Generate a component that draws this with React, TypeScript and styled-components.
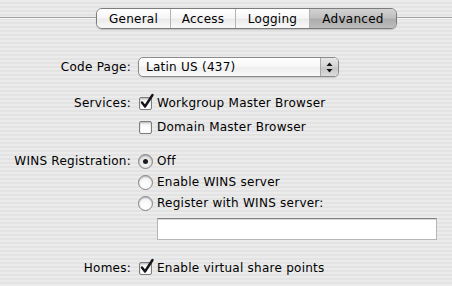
import React from "react";
import styled, { createGlobalStyle } from "styled-components";

const Global = createGlobalStyle`
  html, body {
    margin: 0;
    padding: 0;
    width: 452px;
    height: 286px;
    overflow: hidden;
  }
  body {
    background: repeating-linear-gradient(
      to bottom,
      #ebebeb 0px,
      #ebebeb 2px,
      #e3e3e3 2px,
      #e3e3e3 4px
    );
    font-family: "DejaVu Sans", "Liberation Sans", sans-serif;
    font-size: 12px;
    letter-spacing: 0.25px;
    color: #000;
  }
`;

const Page = styled.div`
  width: 452px;
  height: 286px;
  padding-top: 8px;
  box-sizing: border-box;
`;

const TabRow = styled.div`
  display: flex;
  align-items: center;
  height: 21px;
`;

const TabLine = styled.div<{ $w?: number }>`
  height: 1px;
  background: #a2a2a2;
  border-bottom: 1px solid #f6f6f6;
  margin-top: -1px;
  ${(p) => (p.$w ? `width: ${p.$w}px;` : "flex: 1;")}
`;

const Tabs = styled.div`
  display: flex;
  height: 21px;
  box-sizing: border-box;
  border: 1px solid #7c7c7c;
  border-radius: 6px;
  overflow: hidden;
  box-shadow: 0 1px 1px rgba(0, 0, 0, 0.18);
`;

const Tab = styled.div<{ $w: number; $selected?: boolean }>`
  width: ${(p) => p.$w}px;
  box-sizing: border-box;
  display: flex;
  align-items: center;
  justify-content: center;
  border-left: 1px solid #b4b4b4;
  &:first-child {
    border-left: none;
  }
  background: ${(p) =>
    p.$selected
      ? "linear-gradient(#d2d2d2 0%, #c0c0c0 45%, #adadad 55%, #bdbdbd 100%)"
      : "linear-gradient(#ffffff 0%, #f7f7f7 45%, #ebebeb 55%, #f9f9f9 100%)"};
  padding-top: 1px;
`;

const Form = styled.div`
  display: flex;
  flex-direction: column;
  margin-top: 28px;
`;

const Row = styled.div<{ $mt?: number }>`
  display: grid;
  grid-template-columns: 131px 1fr;
  column-gap: 7px;
  margin-top: ${(p) => p.$mt ?? 0}px;
  align-items: start;
`;

const Label = styled.div<{ $h: number }>`
  text-align: right;
  height: ${(p) => p.$h}px;
  line-height: ${(p) => p.$h}px;
  white-space: nowrap;
`;

const Controls = styled.div<{ $gap: number }>`
  display: flex;
  flex-direction: column;
  gap: ${(p) => p.$gap}px;
`;

const Popup = styled.div`
  width: 201px;
  height: 20px;
  box-sizing: border-box;
  border: 1px solid #8b8b8b;
  border-radius: 5px;
  display: flex;
  background: linear-gradient(#ffffff 0%, #f8f8f8 45%, #eeeeee 55%, #fafafa 100%);
  box-shadow: 0 1px 1px rgba(0, 0, 0, 0.15);
  overflow: hidden;
`;

const PopupText = styled.div`
  flex: 1;
  padding-left: 7px;
  line-height: 18px;
`;

const PopupArrows = styled.div`
  width: 17px;
  border-left: 1px solid #a8a8a8;
  display: flex;
  align-items: center;
  justify-content: center;
  background: linear-gradient(#e6e6e6 0%, #d6d6d6 45%, #c6c6c6 55%, #dcdcdc 100%);
`;

const Option = styled.div`
  display: flex;
  align-items: center;
  height: 18px;
  white-space: nowrap;
`;

const BoxWrap = styled.div`
  position: relative;
  width: 13px;
  height: 13px;
  margin-left: 1px;
  margin-right: 5px;
  flex: none;
`;

const Box = styled.div`
  width: 13px;
  height: 13px;
  box-sizing: border-box;
  border: 1px solid #7d7d7d;
  border-radius: 2px;
  background: linear-gradient(#f0f0f0 0%, #ffffff 60%, #ffffff 100%);
  box-shadow: inset 0 1px 2px rgba(0, 0, 0, 0.25);
`;

const Check = styled.svg`
  position: absolute;
  left: 1px;
  top: -3px;
  overflow: visible;
`;

const Radio = styled.div<{ $on?: boolean }>`
  width: 15px;
  height: 15px;
  box-sizing: border-box;
  border-radius: 50%;
  border: 1px solid #838383;
  margin-right: 4px;
  flex: none;
  display: flex;
  align-items: center;
  justify-content: center;
  background: ${(p) =>
    p.$on
      ? "radial-gradient(circle at 50% 60%, #ffffff 0%, #e4e4e4 55%, #bdbdbd 100%)"
      : "radial-gradient(circle at 50% 70%, #ffffff 0%, #f6f6f6 55%, #d4d4d4 100%)"};
  box-shadow: inset 0 1px 1px rgba(0, 0, 0, 0.2);
`;

const Dot = styled.div`
  width: 5px;
  height: 5px;
  border-radius: 50%;
  background: #1c1c1c;
`;

const TextField = styled.div`
  width: 280px;
  height: 22px;
  box-sizing: border-box;
  margin-left: 19px;
  margin-top: 3px;
  background: #fff;
  border: 1px solid #b6b6b6;
  border-top-color: #808080;
  box-shadow: inset 0 1px 0 #d8d8d8;
`;

function CheckBox({ checked }: { checked?: boolean }) {
  return (
    <BoxWrap>
      <Box />
      {checked && (
        <Check width="14" height="15" viewBox="0 0 14 15">
          <path
            d="M2 8.5 L5 12.5 L12.5 1"
            fill="none"
            stroke="#151515"
            strokeWidth="2.4"
            strokeLinecap="round"
            strokeLinejoin="round"
          />
        </Check>
      )}
    </BoxWrap>
  );
}

function ArrowsIcon() {
  return (
    <svg width="7" height="11" viewBox="0 0 7 11">
      <path d="M3.5 0.5 L6.5 4 L0.5 4 Z" fill="#111" />
      <path d="M3.5 10.5 L6.5 7 L0.5 7 Z" fill="#111" />
    </svg>
  );
}

export default function App() {
  return (
    <>
      <Global />
      <Page>
        <TabRow>
          <TabLine $w={96} />
          <Tabs>
            <Tab $w={73}>General</Tab>
            <Tab $w={65}>Access</Tab>
            <Tab $w={74}>Logging</Tab>
            <Tab $w={87} $selected>
              Advanced
            </Tab>
          </Tabs>
          <TabLine />
        </TabRow>
        <Form>
          <Row>
            <Label $h={20}>Code Page:</Label>
            <Popup>
              <PopupText>Latin US (437)</PopupText>
              <PopupArrows>
                <ArrowsIcon />
              </PopupArrows>
            </Popup>
          </Row>
          <Row $mt={17}>
            <Label $h={18}>Services:</Label>
            <Controls $gap={6}>
              <Option>
                <CheckBox checked />
                Workgroup Master Browser
              </Option>
              <Option>
                <CheckBox />
                Domain Master Browser
              </Option>
            </Controls>
          </Row>
          <Row $mt={16}>
            <Label $h={18}>WINS Registration:</Label>
            <Controls $gap={3}>
              <Option>
                <Radio $on>
                  <Dot />
                </Radio>
                Off
              </Option>
              <Option>
                <Radio />
                Enable WINS server
              </Option>
              <Option>
                <Radio />
                Register with WINS server:
              </Option>
              <TextField />
            </Controls>
          </Row>
          <Row $mt={19}>
            <Label $h={18}>Homes:</Label>
            <Controls $gap={0}>
              <Option>
                <CheckBox checked />
                Enable virtual share points
              </Option>
            </Controls>
          </Row>
        </Form>
      </Page>
    </>
  );
}
